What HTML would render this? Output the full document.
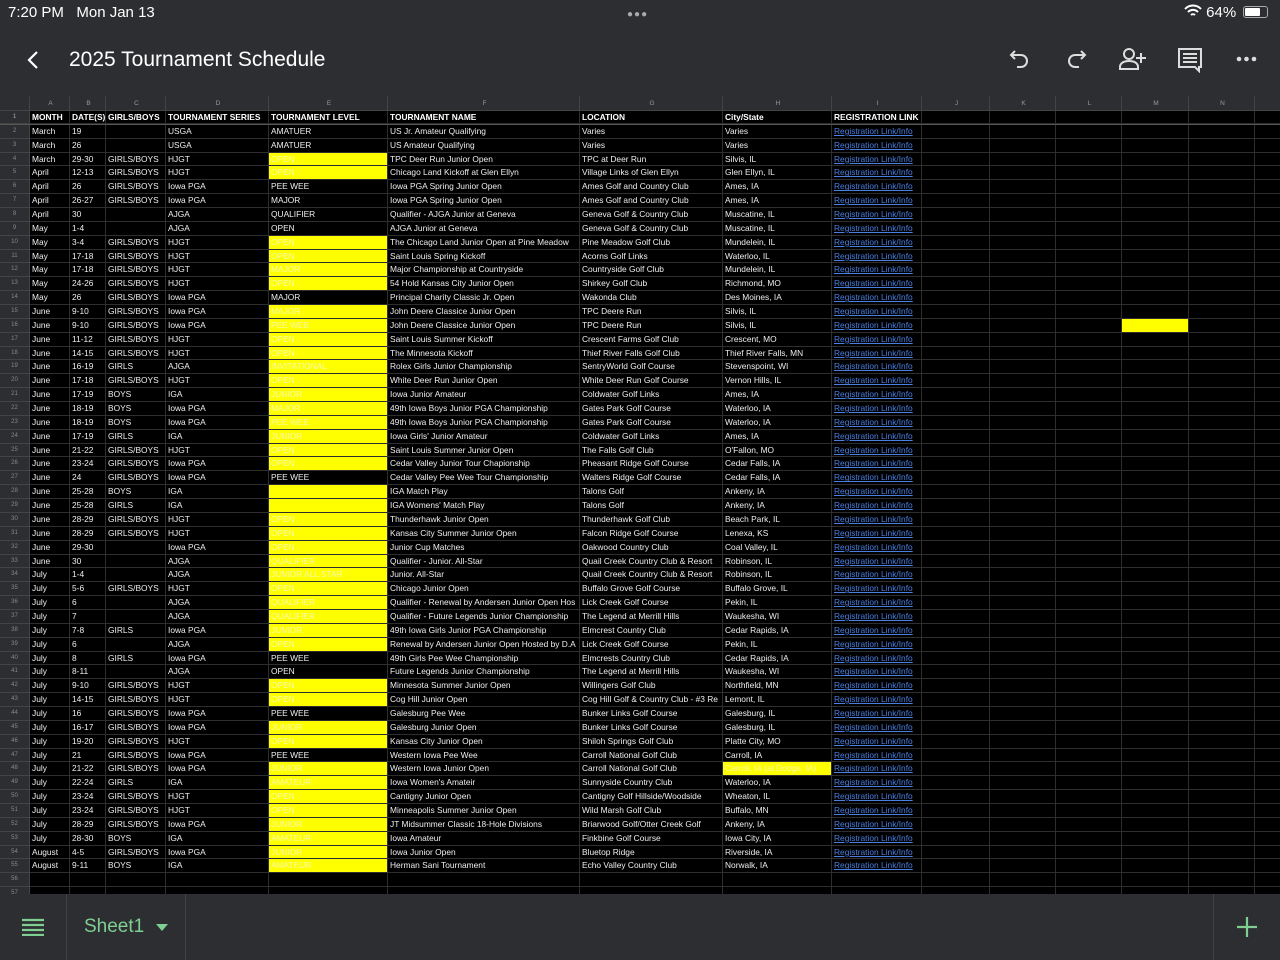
<!DOCTYPE html>
<html><head><meta charset="utf-8">
<style>
*{margin:0;padding:0;box-sizing:border-box}
body{width:1280px;height:960px;background:#2d2e31;font-family:"Liberation Sans",sans-serif;overflow:hidden;position:relative;color:#fff}
.status{position:absolute;top:4px;left:8px;font-size:15px;color:#fff}
.top{position:absolute;top:0;left:0;width:1280px;height:97px;background:#2d2e31}
.title{position:absolute;left:69px;top:48px;font-size:21px;color:#fff}
.sheet{position:absolute;top:96px;left:0;width:1280px;height:798px;background:#000;overflow:hidden}
.r{display:flex;height:13.86px;line-height:13.86px;font-size:8.4px;white-space:nowrap}
.r span{border-right:1px solid #2e2e2e;border-bottom:1px solid #2e2e2e;overflow:hidden;padding-left:2px;flex:none;color:#eee}
.r span:nth-child(1){width:30px;background:#2d2e31;color:#888;text-align:center;font-size:6px;padding:0;border-color:#444}
.r span:nth-child(2){width:40px}.r span:nth-child(3){width:36px}.r span:nth-child(4){width:60px}
.r span:nth-child(5){width:103px}.r span:nth-child(6){width:119px}.r span:nth-child(7){width:192px}
.r span:nth-child(8){width:143px}.r span:nth-child(9){width:109px}.r span:nth-child(10){width:90px;color:#4a7fe0;text-decoration:underline}
.r span:nth-child(11){width:68px}.r span:nth-child(12){width:66px}.r span:nth-child(13){width:66px}.r span:nth-child(14){width:67px}.r span:nth-child(15){width:66px}.r span:nth-child(16){width:40px}
.h{height:15px;line-height:15px}
.h span{background:#2d2e31!important;color:#999!important;text-align:center;font-size:6.5px;border-color:#444!important;text-decoration:none!important}
.r1 span{font-weight:bold;color:#fff}
.r1 span:nth-child(10){color:#fff;text-decoration:none}
.r1{border-bottom:1px solid #555}
.y{background:#ffff00;color:#f8f8b0!important}
.bot{position:absolute;top:894px;left:0;width:1280px;height:66px;background:#2d2e31}
</style></head><body>
<div class="top">
<div class="status">7:20 PM&nbsp;&nbsp;&nbsp;Mon Jan 13</div>
<div style="position:absolute;left:627px;top:9px;font-size:10px;color:#aaa;letter-spacing:1px">●●●</div>
<div style="position:absolute;left:1184px;top:4px;font-size:15px">
<svg width="18" height="14" viewBox="0 0 18 14" style="vertical-align:-1px"><path d="M1 5a11 11 0 0 1 16 0M4 8a7 7 0 0 1 10 0M7 11a3 3 0 0 1 4 0" stroke="#fff" stroke-width="2" fill="none"/></svg> 64%</div>
<div style="position:absolute;left:1243px;top:6px;width:25px;height:12px;border:1px solid #aaa;border-radius:3px;padding:1px"><div style="width:15px;height:8px;background:#fff;border-radius:1px"></div></div>
<svg style="position:absolute;left:26px;top:50px" width="14" height="20"><path d="M11 2L3 10l8 8" stroke="#fff" stroke-width="2.2" fill="none"/></svg>
<div class="title">2025 Tournament Schedule</div>
<svg style="position:absolute;left:1008px;top:48px" width="24" height="22"><path d="M7 3L3 7l4 4M3 7h10a6 6 0 0 1 0 12H9" stroke="#ddd" stroke-width="2" fill="none"/></svg>
<svg style="position:absolute;left:1064px;top:48px" width="24" height="22"><path d="M17 3l4 4-4 4M21 7H11a6 6 0 0 0 0 12h4" stroke="#ddd" stroke-width="2" fill="none"/></svg>
<svg style="position:absolute;left:1118px;top:46px" width="30" height="26"><circle cx="11" cy="8" r="5" stroke="#ddd" stroke-width="2" fill="none"/><path d="M2 23v-2c0-4 4-6 9-6s9 2 9 6v2z" stroke="#ddd" stroke-width="2" fill="none"/><path d="M23 7v10M18 12h10" stroke="#ddd" stroke-width="2"/></svg>
<svg style="position:absolute;left:1177px;top:47px" width="26" height="26"><path d="M2 2h22v18h-2v4l-4-4H2z" stroke="#ddd" stroke-width="2" fill="none"/><path d="M6 7h14M6 11h14M6 15h14" stroke="#ddd" stroke-width="2"/></svg>
<svg style="position:absolute;left:1236px;top:55px" width="22" height="8"><circle cx="3" cy="4" r="2.3" fill="#ddd"/><circle cx="10.5" cy="4" r="2.3" fill="#ddd"/><circle cx="18" cy="4" r="2.3" fill="#ddd"/></svg>
</div>
<div class="sheet">
<div class="r h"><span></span><span>A</span><span>B</span><span>C</span><span>D</span><span>E</span><span>F</span><span>G</span><span>H</span><span>I</span><span>J</span><span>K</span><span>L</span><span>M</span><span>N</span><span></span></div>
<div class="r r1"><span>1</span><span>MONTH</span><span>DATE(S)</span><span>GIRLS/BOYS</span><span>TOURNAMENT SERIES</span><span>TOURNAMENT LEVEL</span><span>TOURNAMENT NAME</span><span>LOCATION</span><span>City/State</span><span>REGISTRATION LINK</span><span></span><span></span><span></span><span></span><span></span><span></span></div>
<div class="r"><span>2</span><span>March</span><span>19</span><span></span><span>USGA</span><span>AMATUER</span><span>US Jr. Amateur Qualifying</span><span>Varies</span><span>Varies</span><span>Registration Link/Info</span><span></span><span></span><span></span><span></span><span></span><span></span></div>
<div class="r"><span>3</span><span>March</span><span>26</span><span></span><span>USGA</span><span>AMATUER</span><span>US Amateur Qualifying</span><span>Varies</span><span>Varies</span><span>Registration Link/Info</span><span></span><span></span><span></span><span></span><span></span><span></span></div>
<div class="r"><span>4</span><span>March</span><span>29-30</span><span>GIRLS/BOYS</span><span>HJGT</span><span class="y">OPEN</span><span>TPC Deer Run Junior Open</span><span>TPC at Deer Run</span><span>Silvis, IL</span><span>Registration Link/Info</span><span></span><span></span><span></span><span></span><span></span><span></span></div>
<div class="r"><span>5</span><span>April</span><span>12-13</span><span>GIRLS/BOYS</span><span>HJGT</span><span class="y">OPEN</span><span>Chicago Land Kickoff at Glen Ellyn</span><span>Village Links of Glen Ellyn</span><span>Glen Ellyn, IL</span><span>Registration Link/Info</span><span></span><span></span><span></span><span></span><span></span><span></span></div>
<div class="r"><span>6</span><span>April</span><span>26</span><span>GIRLS/BOYS</span><span>Iowa PGA</span><span>PEE WEE</span><span>Iowa PGA Spring Junior Open</span><span>Ames Golf and Country Club</span><span>Ames, IA</span><span>Registration Link/Info</span><span></span><span></span><span></span><span></span><span></span><span></span></div>
<div class="r"><span>7</span><span>April</span><span>26-27</span><span>GIRLS/BOYS</span><span>Iowa PGA</span><span>MAJOR</span><span>Iowa PGA Spring Junior Open</span><span>Ames Golf and Country Club</span><span>Ames, IA</span><span>Registration Link/Info</span><span></span><span></span><span></span><span></span><span></span><span></span></div>
<div class="r"><span>8</span><span>April</span><span>30</span><span></span><span>AJGA</span><span>QUALIFIER</span><span>Qualifier - AJGA Junior at Geneva</span><span>Geneva Golf &amp; Country Club</span><span>Muscatine, IL</span><span>Registration Link/Info</span><span></span><span></span><span></span><span></span><span></span><span></span></div>
<div class="r"><span>9</span><span>May</span><span>1-4</span><span></span><span>AJGA</span><span>OPEN</span><span>AJGA Junior at Geneva</span><span>Geneva Golf &amp; Country Club</span><span>Muscatine, IL</span><span>Registration Link/Info</span><span></span><span></span><span></span><span></span><span></span><span></span></div>
<div class="r"><span>10</span><span>May</span><span>3-4</span><span>GIRLS/BOYS</span><span>HJGT</span><span class="y">OPEN</span><span>The Chicago Land Junior Open at Pine Meadow</span><span>Pine Meadow Golf Club</span><span>Mundelein, IL</span><span>Registration Link/Info</span><span></span><span></span><span></span><span></span><span></span><span></span></div>
<div class="r"><span>11</span><span>May</span><span>17-18</span><span>GIRLS/BOYS</span><span>HJGT</span><span class="y">OPEN</span><span>Saint Louis Spring Kickoff</span><span>Acorns Golf Links</span><span>Waterloo, IL</span><span>Registration Link/Info</span><span></span><span></span><span></span><span></span><span></span><span></span></div>
<div class="r"><span>12</span><span>May</span><span>17-18</span><span>GIRLS/BOYS</span><span>HJGT</span><span class="y">MAJOR</span><span>Major Championship at Countryside</span><span>Countryside Golf Club</span><span>Mundelein, IL</span><span>Registration Link/Info</span><span></span><span></span><span></span><span></span><span></span><span></span></div>
<div class="r"><span>13</span><span>May</span><span>24-26</span><span>GIRLS/BOYS</span><span>HJGT</span><span class="y">OPEN</span><span>54 Hold Kansas City Junior Open</span><span>Shirkey Golf Club</span><span>Richmond, MO</span><span>Registration Link/Info</span><span></span><span></span><span></span><span></span><span></span><span></span></div>
<div class="r"><span>14</span><span>May</span><span>26</span><span>GIRLS/BOYS</span><span>Iowa PGA</span><span>MAJOR</span><span>Principal Charity Classic Jr. Open</span><span>Wakonda Club</span><span>Des Moines, IA</span><span>Registration Link/Info</span><span></span><span></span><span></span><span></span><span></span><span></span></div>
<div class="r"><span>15</span><span>June</span><span>9-10</span><span>GIRLS/BOYS</span><span>Iowa PGA</span><span class="y">MAJOR</span><span>John Deere Classice Junior Open</span><span>TPC Deere Run</span><span>Silvis, IL</span><span>Registration Link/Info</span><span></span><span></span><span></span><span></span><span></span><span></span></div>
<div class="r"><span>16</span><span>June</span><span>9-10</span><span>GIRLS/BOYS</span><span>Iowa PGA</span><span class="y">PEE WEE</span><span>John Deere Classice Junior Open</span><span>TPC Deere Run</span><span>Silvis, IL</span><span>Registration Link/Info</span><span></span><span></span><span></span><span class="y"></span><span></span><span></span></div>
<div class="r"><span>17</span><span>June</span><span>11-12</span><span>GIRLS/BOYS</span><span>HJGT</span><span class="y">OPEN</span><span>Saint Louis Summer Kickoff</span><span>Crescent Farms Golf Club</span><span>Crescent, MO</span><span>Registration Link/Info</span><span></span><span></span><span></span><span></span><span></span><span></span></div>
<div class="r"><span>18</span><span>June</span><span>14-15</span><span>GIRLS/BOYS</span><span>HJGT</span><span class="y">OPEN</span><span>The Minnesota Kickoff</span><span>Thief River Falls Golf Club</span><span>Thief River Falls, MN</span><span>Registration Link/Info</span><span></span><span></span><span></span><span></span><span></span><span></span></div>
<div class="r"><span>19</span><span>June</span><span>16-19</span><span>GIRLS</span><span>AJGA</span><span class="y">INVITATIONAL</span><span>Rolex Girls Junior Championship</span><span>SentryWorld Golf Course</span><span>Stevenspoint, WI</span><span>Registration Link/Info</span><span></span><span></span><span></span><span></span><span></span><span></span></div>
<div class="r"><span>20</span><span>June</span><span>17-18</span><span>GIRLS/BOYS</span><span>HJGT</span><span class="y">OPEN</span><span>White Deer Run Junior Open</span><span>White Deer Run Golf Course</span><span>Vernon Hills, IL</span><span>Registration Link/Info</span><span></span><span></span><span></span><span></span><span></span><span></span></div>
<div class="r"><span>21</span><span>June</span><span>17-19</span><span>BOYS</span><span>IGA</span><span class="y">JUNIOR</span><span>Iowa Junior Amateur</span><span>Coldwater Golf Links</span><span>Ames, IA</span><span>Registration Link/Info</span><span></span><span></span><span></span><span></span><span></span><span></span></div>
<div class="r"><span>22</span><span>June</span><span>18-19</span><span>BOYS</span><span>Iowa PGA</span><span class="y">MAJOR</span><span>49th Iowa Boys Junior PGA Championship</span><span>Gates Park Golf Course</span><span>Waterloo, IA</span><span>Registration Link/Info</span><span></span><span></span><span></span><span></span><span></span><span></span></div>
<div class="r"><span>23</span><span>June</span><span>18-19</span><span>BOYS</span><span>Iowa PGA</span><span class="y">PEE WEE</span><span>49th Iowa Boys Junior PGA Championship</span><span>Gates Park Golf Course</span><span>Waterloo, IA</span><span>Registration Link/Info</span><span></span><span></span><span></span><span></span><span></span><span></span></div>
<div class="r"><span>24</span><span>June</span><span>17-19</span><span>GIRLS</span><span>IGA</span><span class="y">JUNIOR</span><span>Iowa Girls' Junior Amateur</span><span>Coldwater Golf Links</span><span>Ames, IA</span><span>Registration Link/Info</span><span></span><span></span><span></span><span></span><span></span><span></span></div>
<div class="r"><span>25</span><span>June</span><span>21-22</span><span>GIRLS/BOYS</span><span>HJGT</span><span class="y">OPEN</span><span>Saint Louis Summer Junior Open</span><span>The Falls Golf Club</span><span>O'Fallon, MO</span><span>Registration Link/Info</span><span></span><span></span><span></span><span></span><span></span><span></span></div>
<div class="r"><span>26</span><span>June</span><span>23-24</span><span>GIRLS/BOYS</span><span>Iowa PGA</span><span class="y">OPEN</span><span>Cedar Valley Junior Tour Chapionship</span><span>Pheasant Ridge Golf Course</span><span>Cedar Falls, IA</span><span>Registration Link/Info</span><span></span><span></span><span></span><span></span><span></span><span></span></div>
<div class="r"><span>27</span><span>June</span><span>24</span><span>GIRLS/BOYS</span><span>Iowa PGA</span><span>PEE WEE</span><span>Cedar Valley Pee Wee Tour Championship</span><span>Walters Ridge Golf Course</span><span>Cedar Falls, IA</span><span>Registration Link/Info</span><span></span><span></span><span></span><span></span><span></span><span></span></div>
<div class="r"><span>28</span><span>June</span><span>25-28</span><span>BOYS</span><span>IGA</span><span class="y"></span><span>IGA Match Play</span><span>Talons Golf</span><span>Ankeny, IA</span><span>Registration Link/Info</span><span></span><span></span><span></span><span></span><span></span><span></span></div>
<div class="r"><span>29</span><span>June</span><span>25-28</span><span>GIRLS</span><span>IGA</span><span class="y"></span><span>IGA Womens' Match Play</span><span>Talons Golf</span><span>Ankeny, IA</span><span>Registration Link/Info</span><span></span><span></span><span></span><span></span><span></span><span></span></div>
<div class="r"><span>30</span><span>June</span><span>28-29</span><span>GIRLS/BOYS</span><span>HJGT</span><span class="y">OPEN</span><span>Thunderhawk Junior Open</span><span>Thunderhawk Golf Club</span><span>Beach Park, IL</span><span>Registration Link/Info</span><span></span><span></span><span></span><span></span><span></span><span></span></div>
<div class="r"><span>31</span><span>June</span><span>28-29</span><span>GIRLS/BOYS</span><span>HJGT</span><span class="y">OPEN</span><span>Kansas City Summer Junior Open</span><span>Falcon Ridge Golf Course</span><span>Lenexa, KS</span><span>Registration Link/Info</span><span></span><span></span><span></span><span></span><span></span><span></span></div>
<div class="r"><span>32</span><span>June</span><span>29-30</span><span></span><span>Iowa PGA</span><span class="y">OPEN</span><span>Junior Cup Matches</span><span>Oakwood Country Club</span><span>Coal Valley, IL</span><span>Registration Link/Info</span><span></span><span></span><span></span><span></span><span></span><span></span></div>
<div class="r"><span>33</span><span>June</span><span>30</span><span></span><span>AJGA</span><span class="y">QUALIFIER</span><span>Qualifier - Junior. All-Star</span><span>Quail Creek Country Club &amp; Resort</span><span>Robinson, IL</span><span>Registration Link/Info</span><span></span><span></span><span></span><span></span><span></span><span></span></div>
<div class="r"><span>34</span><span>July</span><span>1-4</span><span></span><span>AJGA</span><span class="y">JUNIOR ALL STAR</span><span>Junior. All-Star</span><span>Quail Creek Country Club &amp; Resort</span><span>Robinson, IL</span><span>Registration Link/Info</span><span></span><span></span><span></span><span></span><span></span><span></span></div>
<div class="r"><span>35</span><span>July</span><span>5-6</span><span>GIRLS/BOYS</span><span>HJGT</span><span class="y">OPEN</span><span>Chicago Junior Open</span><span>Buffalo Grove Golf Course</span><span>Buffalo Grove, IL</span><span>Registration Link/Info</span><span></span><span></span><span></span><span></span><span></span><span></span></div>
<div class="r"><span>36</span><span>July</span><span>6</span><span></span><span>AJGA</span><span class="y">QUALIFIER</span><span>Qualifier - Renewal by Andersen Junior Open Hos</span><span>Lick Creek Golf Course</span><span>Pekin, IL</span><span>Registration Link/Info</span><span></span><span></span><span></span><span></span><span></span><span></span></div>
<div class="r"><span>37</span><span>July</span><span>7</span><span></span><span>AJGA</span><span class="y">QUALIFIER</span><span>Qualifier - Future Legends Junior Championship</span><span>The Legend at Merrill Hills</span><span>Waukesha, WI</span><span>Registration Link/Info</span><span></span><span></span><span></span><span></span><span></span><span></span></div>
<div class="r"><span>38</span><span>July</span><span>7-8</span><span>GIRLS</span><span>Iowa PGA</span><span class="y">JUNIOR</span><span>49th Iowa Girls Junior PGA Championship</span><span>Elmcrest Country Club</span><span>Cedar Rapids, IA</span><span>Registration Link/Info</span><span></span><span></span><span></span><span></span><span></span><span></span></div>
<div class="r"><span>39</span><span>July</span><span>6</span><span></span><span>AJGA</span><span class="y">OPEN</span><span>Renewal by Andersen Junior Open Hosted by D.A</span><span>Lick Creek Golf Course</span><span>Pekin, IL</span><span>Registration Link/Info</span><span></span><span></span><span></span><span></span><span></span><span></span></div>
<div class="r"><span>40</span><span>July</span><span>8</span><span>GIRLS</span><span>Iowa PGA</span><span>PEE WEE</span><span>49th Girls Pee Wee Championship</span><span>Elmcrests Country Club</span><span>Cedar Rapids, IA</span><span>Registration Link/Info</span><span></span><span></span><span></span><span></span><span></span><span></span></div>
<div class="r"><span>41</span><span>July</span><span>8-11</span><span></span><span>AJGA</span><span>OPEN</span><span>Future Legends Junior Championship</span><span>The Legend at Merrill Hills</span><span>Waukesha, WI</span><span>Registration Link/Info</span><span></span><span></span><span></span><span></span><span></span><span></span></div>
<div class="r"><span>42</span><span>July</span><span>9-10</span><span>GIRLS/BOYS</span><span>HJGT</span><span class="y">OPEN</span><span>Minnesota Summer Junior Open</span><span>Willingers Golf Club</span><span>Northfield, MN</span><span>Registration Link/Info</span><span></span><span></span><span></span><span></span><span></span><span></span></div>
<div class="r"><span>43</span><span>July</span><span>14-15</span><span>GIRLS/BOYS</span><span>HJGT</span><span class="y">OPEN</span><span>Cog Hill Junior Open</span><span>Cog Hill Golf &amp; Country Club - #3 Re</span><span>Lemont, IL</span><span>Registration Link/Info</span><span></span><span></span><span></span><span></span><span></span><span></span></div>
<div class="r"><span>44</span><span>July</span><span>16</span><span>GIRLS/BOYS</span><span>Iowa PGA</span><span>PEE WEE</span><span>Galesburg Pee Wee</span><span>Bunker Links Golf Course</span><span>Galesburg, IL</span><span>Registration Link/Info</span><span></span><span></span><span></span><span></span><span></span><span></span></div>
<div class="r"><span>45</span><span>July</span><span>16-17</span><span>GIRLS/BOYS</span><span>Iowa PGA</span><span class="y">JUNIOR</span><span>Galesburg Junior Open</span><span>Bunker Links Golf Course</span><span>Galesburg, IL</span><span>Registration Link/Info</span><span></span><span></span><span></span><span></span><span></span><span></span></div>
<div class="r"><span>46</span><span>July</span><span>19-20</span><span>GIRLS/BOYS</span><span>HJGT</span><span class="y">OPEN</span><span>Kansas City Junior Open</span><span>Shiloh Springs Golf Club</span><span>Platte City, MO</span><span>Registration Link/Info</span><span></span><span></span><span></span><span></span><span></span><span></span></div>
<div class="r"><span>47</span><span>July</span><span>21</span><span>GIRLS/BOYS</span><span>Iowa PGA</span><span>PEE WEE</span><span>Western Iowa Pee Wee</span><span>Carroll National Golf Club</span><span>Carroll, IA</span><span>Registration Link/Info</span><span></span><span></span><span></span><span></span><span></span><span></span></div>
<div class="r"><span>48</span><span>July</span><span>21-22</span><span>GIRLS/BOYS</span><span>Iowa PGA</span><span class="y">JUNIOR</span><span>Western Iowa Junior Open</span><span>Carroll National Golf Club</span><span class="y">Carroll, IA (at Dodge, IA)</span><span>Registration Link/Info</span><span></span><span></span><span></span><span></span><span></span><span></span></div>
<div class="r"><span>49</span><span>July</span><span>22-24</span><span>GIRLS</span><span>IGA</span><span class="y">AMATEUR</span><span>Iowa Women's Amateir</span><span>Sunnyside Country Club</span><span>Waterloo, IA</span><span>Registration Link/Info</span><span></span><span></span><span></span><span></span><span></span><span></span></div>
<div class="r"><span>50</span><span>July</span><span>23-24</span><span>GIRLS/BOYS</span><span>HJGT</span><span class="y">OPEN</span><span>Cantigny Junior Open</span><span>Cantigny Golf Hillside/Woodside</span><span>Wheaton, IL</span><span>Registration Link/Info</span><span></span><span></span><span></span><span></span><span></span><span></span></div>
<div class="r"><span>51</span><span>July</span><span>23-24</span><span>GIRLS/BOYS</span><span>HJGT</span><span class="y">OPEN</span><span>Minneapolis Summer Junior Open</span><span>Wild Marsh Golf Club</span><span>Buffalo, MN</span><span>Registration Link/Info</span><span></span><span></span><span></span><span></span><span></span><span></span></div>
<div class="r"><span>52</span><span>July</span><span>28-29</span><span>GIRLS/BOYS</span><span>Iowa PGA</span><span class="y">JUNIOR</span><span>JT Midsummer Classic 18-Hole Divisions</span><span>Briarwood Golf/Otter Creek Golf</span><span>Ankeny, IA</span><span>Registration Link/Info</span><span></span><span></span><span></span><span></span><span></span><span></span></div>
<div class="r"><span>53</span><span>July</span><span>28-30</span><span>BOYS</span><span>IGA</span><span class="y">AMATEUR</span><span>Iowa Amateur</span><span>Finkbine Golf Course</span><span>Iowa City, IA</span><span>Registration Link/Info</span><span></span><span></span><span></span><span></span><span></span><span></span></div>
<div class="r"><span>54</span><span>August</span><span>4-5</span><span>GIRLS/BOYS</span><span>Iowa PGA</span><span class="y">JUNIOR</span><span>Iowa Junior Open</span><span>Bluetop Ridge</span><span>Riverside, IA</span><span>Registration Link/Info</span><span></span><span></span><span></span><span></span><span></span><span></span></div>
<div class="r"><span>55</span><span>August</span><span>9-11</span><span>BOYS</span><span>IGA</span><span class="y">AMATEUR</span><span>Herman Sani Tournament</span><span>Echo Valley Country Club</span><span>Norwalk, IA</span><span>Registration Link/Info</span><span></span><span></span><span></span><span></span><span></span><span></span></div>
<div class="r"><span>56</span><span></span><span></span><span></span><span></span><span></span><span></span><span></span><span></span><span></span><span></span><span></span><span></span><span></span><span></span><span></span></div>
<div class="r"><span>57</span><span></span><span></span><span></span><span></span><span></span><span></span><span></span><span></span><span></span><span></span><span></span><span></span><span></span><span></span><span></span></div>
</div>
<div class="bot">
<div style="position:absolute;left:66px;top:0;width:1px;height:66px;background:#444"></div>
<div style="position:absolute;left:185px;top:0;width:1px;height:66px;background:#444"></div>
<div style="position:absolute;left:1213px;top:0;width:1px;height:66px;background:#444"></div>
<svg style="position:absolute;left:22px;top:24px" width="22" height="18"><path d="M0 2h22M0 7h22M0 12h22M0 17h22" stroke="#7fcf92" stroke-width="2.2"/></svg>
<div style="position:absolute;left:84px;top:22px;font-size:19px;color:#7fcf92">Sheet1</div>
<svg style="position:absolute;left:156px;top:30px" width="12" height="8"><path d="M0 0h12L6 7z" fill="#7fcf92"/></svg>
<svg style="position:absolute;left:1236px;top:22px" width="22" height="22"><path d="M11 1v20M1 11h20" stroke="#7fcf92" stroke-width="2.2"/></svg>
</div>
</body></html>
